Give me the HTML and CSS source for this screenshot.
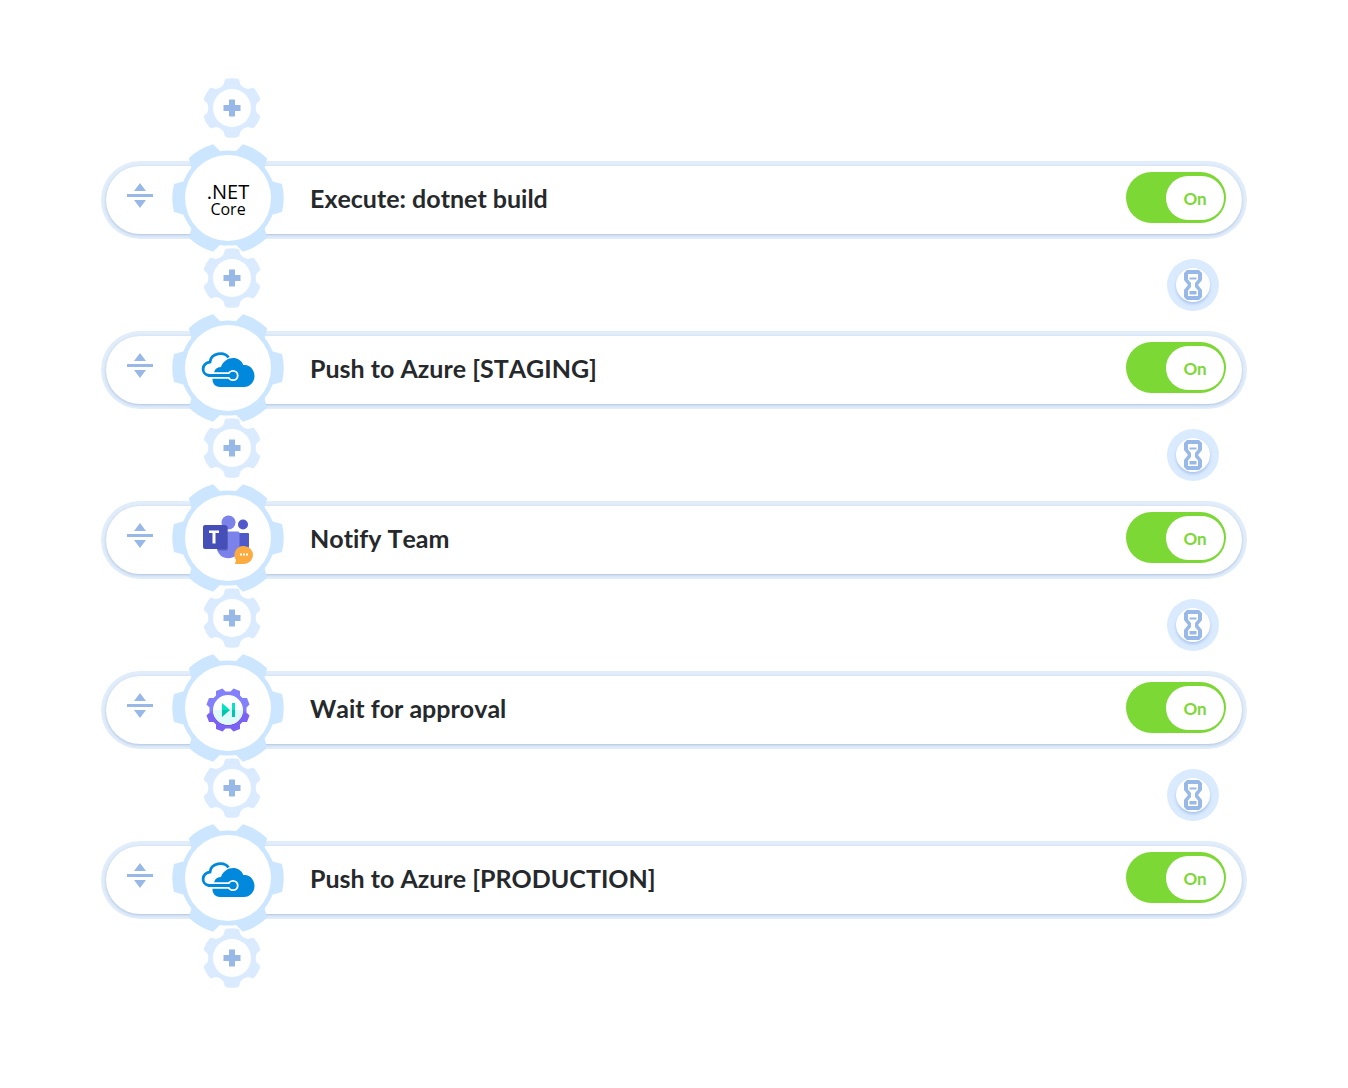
FILE: index.html
```html
<!DOCTYPE html>
<html lang="en">
<head>
  <meta charset="UTF-8">
  <meta name="viewport" content="width=device-width, initial-scale=1.0">
  <title>Pipeline Actions</title>
  <link rel="stylesheet" href="styles.css">
</head>
<body>

  <!-- Shared icons -->
  <svg class="icon-defs" aria-hidden="true">
    <defs>
      <path id="big-tooth" d="M43 -17 L54 -14 Q57.500 0 54 14 L43 17 Z"/>
      <path id="small-tooth" d="M-12 -20 L-8.500 -23.500 L-7.300 -27.800 Q-7 -28.800 -5.500 -29.200 Q0 -30.300 5.500 -29.200 Q7 -28.800 7.300 -27.800 L8.500 -23.500 L12 -20 Z"/>
    </defs>

    <symbol id="gear-big" viewBox="-56 -56 112 112">
      <g fill="#cce6ff">
        <circle r="47.500"/>
        <use href="#big-tooth"/>
        <use href="#big-tooth" transform="rotate(60)"/>
        <use href="#big-tooth" transform="rotate(120)"/>
        <use href="#big-tooth" transform="rotate(180)"/>
        <use href="#big-tooth" transform="rotate(240)"/>
        <use href="#big-tooth" transform="rotate(300)"/>
      </g>
      <circle r="43" fill="#fff"/>
    </symbol>

    <symbol id="gear-add" viewBox="-30 -30 60 60">
      <g fill="#dbebff">
        <circle r="23.500"/>
        <use href="#small-tooth"/>
        <use href="#small-tooth" transform="rotate(60)"/>
        <use href="#small-tooth" transform="rotate(120)"/>
        <use href="#small-tooth" transform="rotate(180)"/>
        <use href="#small-tooth" transform="rotate(240)"/>
        <use href="#small-tooth" transform="rotate(300)"/>
      </g>
      <circle r="19" fill="#fff"/>
      <path d="M-3 -8.500 H3 V-3 H8.500 V3 H3 V8.500 H-3 V3 H-8.500 V-3 H-3 Z" fill="#98b9e8"/>
    </symbol>

    <symbol id="drag" viewBox="0 0 26 26">
      <path d="M13 0 L19 8 H7 Z M0 11 H26 V14 H0 Z M7 17 H19 L13 25 Z" fill="#98b9e8"/>
    </symbol>

    <symbol id="hourglass" viewBox="0 0 18 30">
      <path d="M3 0 H15 L18 3 V10 L14 15 L18 20 V27 L15 30 H3 L0 27 V20 L4 15 L0 10 V3 Z" fill="#98b9e8"/>
      <path d="M4 4 H14 V9.500 L11 13 V17 L14 20.500 V26 H4 V20.500 L7 17 V13 L4 9.500 Z" fill="#fff"/>
      <path d="M5.500 7.500 H12.500 V9.500 H5.500 Z M5.500 21 H12.500 V24.500 H5.500 Z" fill="#98b9e8"/>
    </symbol>

    <symbol id="azure" viewBox="-56 -56 112 112">
      <path d="M-19 7.500 C-27.500 6 -26.500 -5 -18 -6 C-17 -15 -4 -17 0.500 -10.500" fill="none" stroke="#0089dc" stroke-width="2.800"/>
      <path d="M-13.500 3 C-12 0 -10 -1 -7 -1 C-4 -11 11 -14 15.300 -3 C22 -4 26.500 2 26.500 8 C26.500 14 22 19 16 19 H-8 C-13 19 -16 15 -15.500 10 Z" fill="#0089dc"/>
      <path d="M-19 7.500 H5" stroke="#fff" stroke-width="6.500"/>
      <circle cx="5" cy="7.500" r="5.600" fill="#fff"/>
      <path d="M-20 7.500 H5" stroke="#0089dc" stroke-width="3"/>
      <circle cx="5" cy="7.500" r="3.800" fill="#0089dc"/>
    </symbol>
  </svg>

  <main class="pipeline">
    <div class="connector">
      <button class="add-button" aria-label="Add action"><svg><use href="#gear-add"/></svg></button>
    </div>

    <!-- Step 1 -->
    <section class="step">
      <button class="drag-handle" aria-label="Move action"><svg><use href="#drag"/></svg></button>
      <svg class="step-icon" viewBox="-56 -56 112 112" role="img" aria-label=".NET Core">
        <use href="#gear-big" x="-56" y="-56" width="112" height="112"/>
        <text class="net"><tspan x="0" y="1">.NET</tspan><tspan class="core" x="0" y="17">Core</tspan></text>
      </svg>
      <h2 class="step-title">Execute: dotnet build</h2>
      <label class="toggle">
        <input type="checkbox" role="switch" aria-label="Execute: dotnet build" checked>
        <span class="knob">On</span>
      </label>
    </section>
    <div class="connector">
      <button class="add-button" aria-label="Add action"><svg><use href="#gear-add"/></svg></button>
      <button class="wait-button" aria-label="Add delay"><span><svg><use href="#hourglass"/></svg></span></button>
    </div>

    <!-- Step 2 -->
    <section class="step">
      <button class="drag-handle" aria-label="Move action"><svg><use href="#drag"/></svg></button>
      <svg class="step-icon" viewBox="-56 -56 112 112" role="img" aria-label="Azure">
        <use href="#gear-big" x="-56" y="-56" width="112" height="112"/>
        <use href="#azure" x="-56" y="-56" width="112" height="112"/>
      </svg>
      <h2 class="step-title">Push to Azure [STAGING]</h2>
      <label class="toggle">
        <input type="checkbox" role="switch" aria-label="Push to Azure [STAGING]" checked>
        <span class="knob">On</span>
      </label>
    </section>
    <div class="connector">
      <button class="add-button" aria-label="Add action"><svg><use href="#gear-add"/></svg></button>
      <button class="wait-button" aria-label="Add delay"><span><svg><use href="#hourglass"/></svg></span></button>
    </div>

    <!-- Step 3 -->
    <section class="step">
      <button class="drag-handle" aria-label="Move action"><svg><use href="#drag"/></svg></button>
      <svg class="step-icon" viewBox="-56 -56 112 112" role="img" aria-label="Microsoft Teams">
        <use href="#gear-big" x="-56" y="-56" width="112" height="112"/>
        <circle cx="15" cy="-13.500" r="5" fill="#5059c9"/>
        <path d="M10 -5 H20 Q21 -5 21 -4 V8 Q21 14 13 14 H10 Z" fill="#5059c9"/>
        <circle cx="0.500" cy="-15.500" r="7" fill="#7b83eb"/>
        <path d="M-11 -6.500 H10 Q11.500 -6.500 11.500 -5 V9 C11.500 24 -11 24 -11 9 Z" fill="#7b83eb"/>
        <path d="M-6 -12 H-1 Q0 -12 0 -10 V10 Q0 12.500 -2 12.500 H-10.500 V9 H-6 Z" fill="#4a50a8" opacity="0.7"/>
        <rect x="-25" y="-13" width="24" height="24" rx="2" fill="#464eb8"/>
        <path d="M-19 -7.500 H-9 V-5 H-12.500 V5.500 H-15.500 V-5 H-19 Z" fill="#fff"/>
        <path d="M16 8 A9 9 0 1 1 16 26 H7 L8 22 A9 9 0 0 1 16 8 Z" fill="#fbab3f"/>
        <path d="M12 16.500 h2 M15 16.500 h2 M18 16.500 h2" stroke="#fff" stroke-width="2"/>
      </svg>
      <h2 class="step-title">Notify Team</h2>
      <label class="toggle">
        <input type="checkbox" role="switch" aria-label="Notify Team" checked>
        <span class="knob">On</span>
      </label>
    </section>
    <div class="connector">
      <button class="add-button" aria-label="Add action"><svg><use href="#gear-add"/></svg></button>
      <button class="wait-button" aria-label="Add delay"><span><svg><use href="#hourglass"/></svg></span></button>
    </div>

    <!-- Step 4 -->
    <section class="step">
      <button class="drag-handle" aria-label="Move action"><svg><use href="#drag"/></svg></button>
      <svg class="step-icon" viewBox="-56 -56 112 112" role="img" aria-label="Approval">
        <defs>
          <linearGradient id="violet" gradientUnits="userSpaceOnUse" x1="0" y1="-22" x2="0" y2="22">
            <stop offset="0.5" stop-color="#8380fb"/>
            <stop offset="0.6" stop-color="#7b62f5"/>
          </linearGradient>
        </defs>
        <use href="#gear-big" x="-56" y="-56" width="112" height="112"/>
        <g transform="translate(0 2)">
          <path d="M-5.500 -21.500 L-2.500 -18.500 H2.500 L5.500 -21.500 L12 -19 L12 -14.500 L14.500 -12 L19 -12 L21.500 -5.500 L18.500 -2.500 V2.500 L21.500 5.500 L19 12 H14.500 L12 14.500 V19 L5.500 21.500 L2.500 18.500 H-2.500 L-5.500 21.500 L-12 19 V14.500 L-14.500 12 H-19 L-21.500 5.500 L-18.500 2.500 V-2.500 L-21.500 -5.500 L-19 -12 H-14.500 L-12 -14.500 V-19 Z" fill="url(#violet)"/>
          <circle cy="1" r="15" fill="#5b3fd0" opacity="0.5"/>
          <circle r="15" fill="#fff"/>
          <path d="M-15 0 A15 15 0 0 0 15 0 Z" fill="#dffaf8"/>
          <path d="M-6 -7 L2 0 H-6 Z M4 -7 H7 V0 H4 Z" fill="#00e5c0"/>
          <path d="M-6 0 H2 L-6 7 Z M4 0 H7 V7 H4 Z" fill="#00c6ae"/>
        </g>
      </svg>
      <h2 class="step-title">Wait for approval</h2>
      <label class="toggle">
        <input type="checkbox" role="switch" aria-label="Wait for approval" checked>
        <span class="knob">On</span>
      </label>
    </section>
    <div class="connector">
      <button class="add-button" aria-label="Add action"><svg><use href="#gear-add"/></svg></button>
      <button class="wait-button" aria-label="Add delay"><span><svg><use href="#hourglass"/></svg></span></button>
    </div>

    <!-- Step 5 -->
    <section class="step">
      <button class="drag-handle" aria-label="Move action"><svg><use href="#drag"/></svg></button>
      <svg class="step-icon" viewBox="-56 -56 112 112" role="img" aria-label="Azure">
        <use href="#gear-big" x="-56" y="-56" width="112" height="112"/>
        <use href="#azure" x="-56" y="-56" width="112" height="112"/>
      </svg>
      <h2 class="step-title">Push to Azure [PRODUCTION]</h2>
      <label class="toggle">
        <input type="checkbox" role="switch" aria-label="Push to Azure [PRODUCTION]" checked>
        <span class="knob">On</span>
      </label>
    </section>
    <div class="connector">
      <button class="add-button" aria-label="Add action"><svg><use href="#gear-add"/></svg></button>
    </div>
  </main>

</body>
</html>
```
FILE: styles.css
```css
/* General Page Styling */
* {
  box-sizing: border-box;
}

body {
  margin: 0;
  background-color: white;
  color: #26292c;
  font-family: Lato, sans-serif;
}

button {
  padding: 0;
  border: none;
  background: none;
  cursor: pointer;
}

svg {
  display: block;
  overflow: visible;
}

.icon-defs {
  position: absolute;
  width: 0;
  height: 0;
}

/* Pipeline */
.pipeline {
  padding: 69px 101px 0;
}

/* Space between two steps */
.connector {
  display: flex;
  justify-content: space-between;
  height: 92px;
  padding: 9px 28px 0 101px;
}

.add-button,
.add-button svg {
  width: 60px;
  height: 60px;
}

.wait-button {
  display: flex;
  justify-content: center;
  align-items: center;
  width: 52px;
  height: 52px;
  margin-top: 11px;
  border-radius: 50%;
  background-color: #dbebff;
}

.wait-button span {
  display: flex;
  justify-content: center;
  align-items: center;
  width: 34px;
  height: 34px;
  border-radius: 50%;
  background-color: white;
  box-shadow: 0 2px 3px rgba(120, 160, 215, 0.5);
}

.wait-button svg {
  width: 18px;
  height: 30px;
}

/* Step card, the outer ring is a shadow so that the soft one lies over it */
.step {
  display: flex;
  align-items: center;
  height: 68px;
  margin: 5px;
  padding: 0 16px 4px 21px;
  border-radius: 34px;
  background-color: white;
  box-shadow: 0 1px 3px rgba(120, 150, 200, 0.5), 0 0 0 5px #e1edfa;
}

.drag-handle,
.drag-handle svg {
  width: 26px;
  height: 26px;
}

.drag-handle {
  margin-bottom: 4px;
}

.step-icon {
  flex: none;
  width: 112px;
  height: 112px;
  margin: -22px 26px -22px 19px;
}

.step-title {
  flex: 1;
  margin: 0;
  font-size: 25px;
  line-height: 32px;
  font-weight: 700;
  font-kerning: none;
  font-variant-ligatures: none;
}

.net {
  font-family: "Open Sans", sans-serif;
  font-size: 20px;
  text-anchor: middle;
  fill: #000;
}

.core {
  font-size: 16px;
}

/* On / off switch */
.toggle {
  display: flex;
  justify-content: flex-end;
  width: 100px;
  height: 51px;
  margin-bottom: 1px;
  padding: 4px 2px 3px;
  border-radius: 26px;
  background-color: #7bd835;
  cursor: pointer;
}

.toggle input {
  appearance: none;
  width: 0;
  height: 0;
  margin: 0;
}

.knob {
  display: flex;
  justify-content: center;
  align-items: center;
  width: 58px;
  border-radius: 22px;
  background-color: white;
  color: #7bd835;
  font-size: 17px;
  font-weight: 700;
}
```
